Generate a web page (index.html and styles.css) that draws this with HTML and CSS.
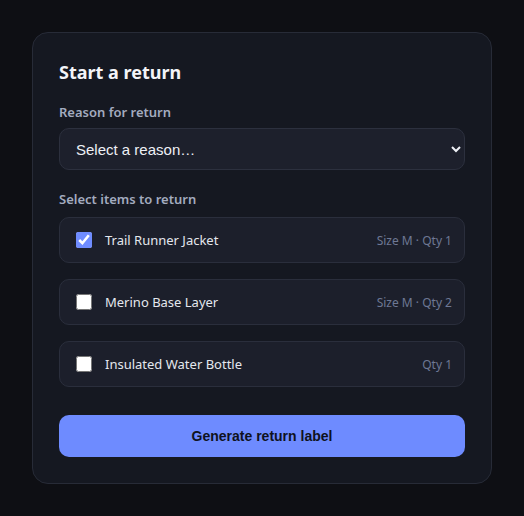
FILE: index.html
```html
<!DOCTYPE html>
<html lang="en">
<head>
    <meta charset="UTF-8">
    <meta name="viewport" content="width=device-width, initial-scale=1.0">
    <title>Start a return</title>
    <link rel="stylesheet" href="styles.css">
</head>
<body>

    <form class="card">
        <h1 class="title">Start a return</h1>

        <label class="label" for="reason">Reason for return</label>
        <select id="reason" class="select">
            <option>Select a reason…</option>
            <option>Wrong size</option>
            <option>Damaged item</option>
            <option>Changed my mind</option>
        </select>

        <div class="label label-items">Select items to return</div>
        <div class="items">
            <label class="item">
                <input type="checkbox" checked>
                <span class="name">Trail Runner Jacket</span>
                <span class="meta">Size M · Qty 1</span>
            </label>
            <label class="item">
                <input type="checkbox">
                <span class="name">Merino Base Layer</span>
                <span class="meta">Size M · Qty 2</span>
            </label>
            <label class="item">
                <input type="checkbox">
                <span class="name">Insulated Water Bottle</span>
                <span class="meta">Qty 1</span>
            </label>
        </div>

        <button type="button" class="btn">Generate return label</button>
    </form>

</body>
</html>
```

FILE: styles.css
```css
html, body {
    margin: 0;
    padding: 0;
}

body {
    background: #0e0f14;
    padding: 32px;
    font-family: "Noto Sans", "Open Sans", sans-serif;
    color: #e6e8ef;
}

.card {
    display: flex;
    flex-direction: column;
    background: #151821;
    border: 1px solid #272b37;
    border-radius: 16px;
    padding: 26px;
}

.title {
    margin: 1px 0 19px;
    font-size: 18px;
    line-height: 24px;
    font-weight: 700;
    color: #f3f4f8;
}

.label {
    font-size: 13px;
    line-height: 18px;
    font-weight: 600;
    color: #a3abbf;
    margin-bottom: 7px;
}

.label-items {
    margin-top: 20px;
    margin-bottom: 9px;
}

.select {
    height: 42px;
    padding: 0 12px 0 12px;
    background: #1d202c;
    color: #eef0f6;
    border: 1px solid #2c303e;
    border-radius: 10px;
    font-family: "Liberation Sans", Arial, sans-serif;
    font-size: 15px;
    color-scheme: dark;
}

.items {
    display: flex;
    flex-direction: column;
    gap: 16px;
}

.item {
    display: flex;
    align-items: center;
    height: 46px;
    box-sizing: border-box;
    padding: 0 12px;
    background: #1c1f2b;
    border: 1px solid #2a2e3c;
    border-radius: 10px;
}

.item input {
    width: 16px;
    height: 16px;
    margin: 3px 13px 3px 4px;
    accent-color: #6f8cff;
}

.name {
    flex: 1;
    font-size: 13px;
    color: #e4e7ee;
}

.meta {
    font-size: 12px;
    color: #6e7894;
}

.btn {
    margin-top: 28px;
    height: 42px;
    border: 0;
    border-radius: 10px;
    background: #6e8bff;
    color: #0f1220;
    font-family: "Liberation Sans", Arial, sans-serif;
    font-size: 14px;
    font-weight: 700;
}
```
